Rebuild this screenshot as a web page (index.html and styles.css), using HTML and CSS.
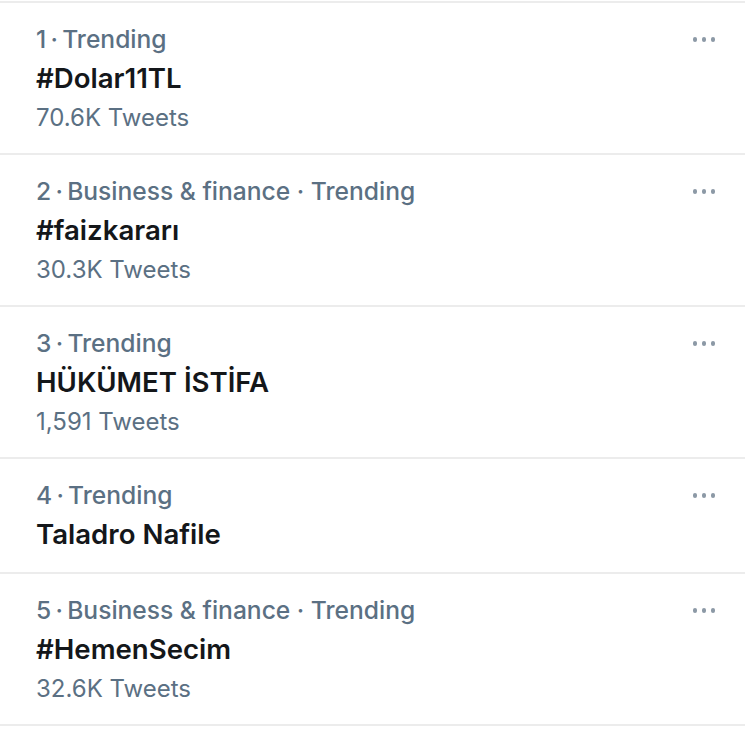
FILE: index.html
```html
<!DOCTYPE html>
<html lang="tr">
<head>
<meta charset="utf-8">
<link rel="stylesheet" href="styles.css">
</head>
<body>
<ul class="trends">
  <li class="trend">
    <div class="meta-row"><span class="meta">1&#8201;·&#8201;Trending</span><span class="more"><i></i><i></i><i></i></span></div>
    <div class="title">#Dolar11TL</div>
    <div class="count">70.6K Tweets</div>
  </li>
  <li class="trend">
    <div class="meta-row"><span class="meta">2&#8201;·&#8201;Business &amp; finance · Trending</span><span class="more"><i></i><i></i><i></i></span></div>
    <div class="title">#faizkararı</div>
    <div class="count">30.3K Tweets</div>
  </li>
  <li class="trend">
    <div class="meta-row"><span class="meta">3&#8201;·&#8201;Trending</span><span class="more"><i></i><i></i><i></i></span></div>
    <div class="title">HÜKÜMET İSTİFA</div>
    <div class="count">1,591 Tweets</div>
  </li>
  <li class="trend trend-short">
    <div class="meta-row"><span class="meta">4&#8201;·&#8201;Trending</span><span class="more"><i></i><i></i><i></i></span></div>
    <div class="title">Taladro Nafile</div>
  </li>
  <li class="trend">
    <div class="meta-row"><span class="meta">5&#8201;·&#8201;Business &amp; finance · Trending</span><span class="more"><i></i><i></i><i></i></span></div>
    <div class="title">#HemenSecim</div>
    <div class="count">32.6K Tweets</div>
  </li>
</ul>
</body>
</html>
```
FILE: styles.css
```css
html, body {
  margin: 0;
  padding: 0;
  background: #ffffff;
}
body {
  font-family: Inter, "Noto Sans", "Liberation Sans", sans-serif;
  -webkit-font-smoothing: antialiased;
}
.trends {
  list-style: none;
  margin: 1px 0 0 0;
  padding: 0;
  border-top: 2px solid #ececec;
}
.trend {
  padding: 17px 30px 16px 36px;
  border-bottom: 2px solid #ececec;
  line-height: 39px;
}
.trend-short {
  padding-bottom: 18px;
}
.meta-row {
  display: flex;
  align-items: center;
  justify-content: space-between;
}
.meta {
  color: #5b7083;
  font-weight: 500;
  font-size: 24.6px;
}
.title {
  color: #14171a;
  font-weight: 600;
  font-size: 27.6px;
}
.count {
  color: #5b7083;
  font-weight: 400;
  font-size: 24px;
}
.more {
  display: flex;
  gap: 4.5px;
}
.more i {
  display: block;
  width: 4.5px;
  height: 4.5px;
  border-radius: 50%;
  background: #8c99a6;
}
```
